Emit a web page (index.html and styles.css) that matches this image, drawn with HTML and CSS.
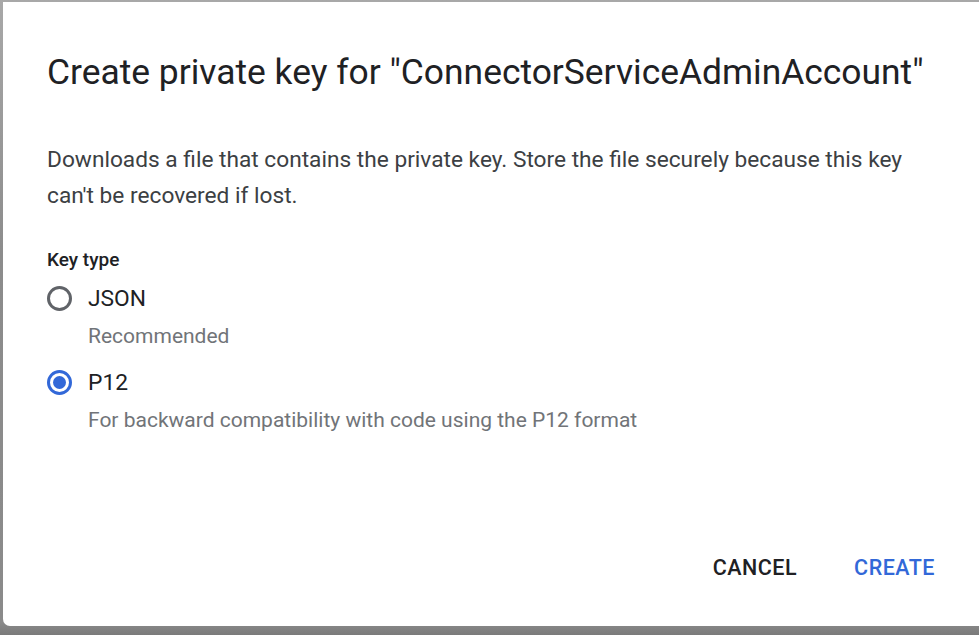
FILE: index.html
```html
<!DOCTYPE html>
<html>
<head>
<meta charset="utf-8">
<link rel="stylesheet" href="styles.css">
</head>
<body>
<div class="frame">
  <div class="dialog">
    <h1 class="title">Create private key for "ConnectorServiceAdminAccount"</h1>
    <p class="desc">Downloads a file that contains the private key. Store the file securely because this key can't be recovered if lost.</p>
    <div class="group-label">Key type</div>
    <div class="options">
      <div class="option">
        <div class="row">
          <span class="radio"></span>
          <span class="label">JSON</span>
        </div>
        <div class="hint">Recommended</div>
      </div>
      <div class="option">
        <div class="row">
          <span class="radio checked"></span>
          <span class="label">P12</span>
        </div>
        <div class="hint">For backward compatibility with code using the P12 format</div>
      </div>
    </div>
    <div class="actions">
      <button class="btn cancel">CANCEL</button>
      <button class="btn create">CREATE</button>
    </div>
  </div>
</div>
</body>
</html>
```
FILE: styles.css
```css
html, body {
  margin: 0;
  padding: 0;
  width: 979px;
  height: 635px;
  overflow: hidden;
}
body {
  font-family: Roboto, "Liberation Sans", Arial, sans-serif;
  color: #202124;
}
.frame {
  box-sizing: border-box;
  width: 979px;
  height: 635px;
  padding: 2px 0 9px 3px;
  background: linear-gradient(to bottom, #a8a8a8 0, #8c8c8c 40%, #8a8a8a 98%, #7a7a7a 100%);
}
.dialog {
  box-sizing: border-box;
  height: 624px;
  background: #fff;
  border-bottom-left-radius: 7px;
  padding: 48px 44px 0 44px;
  display: flex;
  flex-direction: column;
}
.title {
  margin: 0;
  font-weight: 400;
  font-size: 35.4px;
  line-height: 44px;
  color: #202124;
  white-space: nowrap;
}
.desc {
  margin: 48px 0 0 0;
  font-size: 22.7px;
  line-height: 36px;
  color: #3c4043;
  width: 880px;
}
.group-label {
  margin-top: 34px;
  font-size: 19px;
  font-weight: 500;
  line-height: 24px;
  color: #202124;
}
.options {
  display: flex;
  flex-direction: column;
  gap: 8px;
  margin-top: 8px;
}
.row {
  display: flex;
  align-items: center;
  height: 36px;
}
.radio {
  box-sizing: border-box;
  width: 25px;
  height: 25px;
  border-radius: 50%;
  border: 3px solid #606368;
  margin-left: 0;
  margin-right: 16px;
  position: relative;
}
.radio.checked {
  border-color: #3268d8;
}
.radio.checked::after {
  content: "";
  position: absolute;
  left: 3px;
  top: 3px;
  width: 13px;
  height: 13px;
  border-radius: 50%;
  background: #3268d8;
}
.label {
  font-size: 22.8px;
  color: #202124;
}
.hint {
  padding-left: 41px;
  font-size: 21px;
  line-height: 40px;
  color: #717478;
}
.actions {
  margin-top: auto;
  margin-bottom: 37px;
  margin-right: -16px;
  display: flex;
  justify-content: flex-end;
  gap: 25px;
}
.btn {
  background: none;
  border: none;
  font-family: Roboto, "Liberation Sans", Arial, sans-serif;
  font-size: 21.5px;
  font-weight: 500;
  letter-spacing: 0.5px;
  padding: 0 16px;
  height: 44px;
  cursor: pointer;
}
.cancel { color: #202124; }
.create { color: #3268d8; }
```
